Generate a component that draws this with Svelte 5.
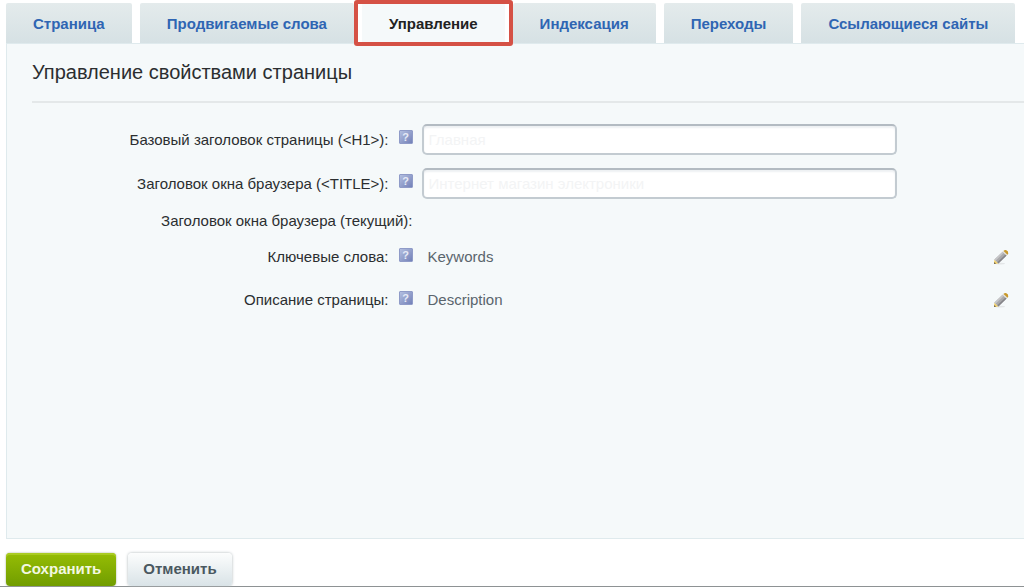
<script>
  let activeTab = $state('manage');
  let h1 = $state('Главная');
  let title = $state('Интернет магазин электроники');

  const tabs = [
    { id: 'page', label: 'Страница' },
    { id: 'words', label: 'Продвигаемые слова' },
    { id: 'manage', label: 'Управление' },
    { id: 'index', label: 'Индексация' },
    { id: 'visits', label: 'Переходы' },
    { id: 'refs', label: 'Ссылающиеся сайты' }
  ];
</script>

{#snippet help()}
  <button type="button" class="help">?</button>
{/snippet}

{#snippet pencil()}
  <button type="button" class="edit" aria-label="Изменить">
    <svg width="16" height="16" viewBox="0 0 16 16">
      <ellipse cx="7" cy="14.6" rx="5" ry="0.9" fill="#e3e6e7" />
      <path d="M1 15 L1.4 10.6 L5.4 14.4 Z" fill="#f3d26a" />
      <path d="M1 15 L1.2 13 L3 14.7 Z" fill="#6b5f4a" />
      <path d="M1.4 10.6 L9.6 2.8 L13.6 6.6 L5.4 14.4 Z" fill="#a9a9ab" />
      <path d="M1.4 10.6 L9.6 2.8 L10.8 3.9 L2.6 11.7 Z" fill="#c6c6c8" />
      <path d="M4.3 13.3 L12.5 5.5 L13.6 6.6 L5.4 14.4 Z" fill="#858589" />
      <path d="M10.4 2 Q11.6 0.8 13.4 1.2 Q15.6 2.2 15.2 4.4 L14.3 5.9 Z" fill="#c8982a" />
      <path d="M9.6 2.8 L10.4 2 L14.4 5.8 L13.6 6.6 Z" fill="#e0dccf" />
    </svg>
  </button>
{/snippet}

<div class="page">
  <div class="tabs">
    {#each tabs as tab}
      <button
        type="button"
        class="tab"
        class:active={activeTab === tab.id}
        onclick={() => (activeTab = tab.id)}>{tab.label}</button>
    {/each}
  </div>

  <form id="seo-form" class="panel">
    <h1>Управление свойствами страницы</h1>

    <div class="row">
      <div class="name"><label for="h1">Базовый заголовок страницы (&lt;H1&gt;):</label>{@render help()}</div>
      <div class="field"><input id="h1" type="text" bind:value={h1} /></div>
    </div>
    <div class="row">
      <div class="name"><label for="title">Заголовок окна браузера (&lt;TITLE&gt;):</label>{@render help()}</div>
      <div class="field"><input id="title" type="text" bind:value={title} /></div>
    </div>
    <div class="row current">
      <div class="name"><span>Заголовок окна браузера (текущий):</span></div>
    </div>
    <div class="row text">
      <div class="name"><span>Ключевые слова:</span>{@render help()}</div>
      <div class="field value"><span>Keywords</span>{@render pencil()}</div>
    </div>
    <div class="row text">
      <div class="name"><span>Описание страницы:</span>{@render help()}</div>
      <div class="field value"><span>Description</span>{@render pencil()}</div>
    </div>
  </form>

  <div class="buttons">
    <button type="submit" form="seo-form" class="btn save">Сохранить</button>
    <button type="button" class="btn cancel">Отменить</button>
  </div>
</div>

<style>
  :global(body) {
    background: #fff;
  }

  .page {
    display: flex;
    flex-direction: column;
    box-sizing: border-box;
    min-height: 100vh;
    padding-top: 3px;
    border-bottom: 1px solid #8e9294;
    font-family: "Liberation Sans", Arial, sans-serif;
    color: #2b2e30;
  }

  button {
    font-family: inherit;
    cursor: pointer;
  }

  .tabs {
    display: flex;
    gap: 8px;
    padding-left: 6px;
  }

  .tab {
    position: relative;
    height: 40px;
    padding: 0 27px;
    border: 0;
    border-radius: 2px 2px 0 0;
    background: linear-gradient(#e4ebec, #d6e1e4);
    color: #2f65b3;
    font-size: 15px;
    font-weight: bold;
    white-space: nowrap;
  }

  .tab.active {
    background: #f5f9fa;
    color: #222;
  }

  /* frame around the open tab */
  .tab.active::after {
    content: "";
    position: absolute;
    inset: -3px -8px;
    border: 4px solid #d55145;
    border-radius: 3px;
  }

  .panel {
    flex: 1;
    margin-left: 6px;
    padding: 0 0 16px 25px;
    border: 1px solid #dfeaed;
    border-right: 0;
    background: #f5f9fa;
  }

  h1 {
    margin: 0 0 14px;
    padding: 16px 0 17px;
    border-bottom: 2px solid #e4e8e9;
    font-size: 20px;
    line-height: 24px;
    font-weight: normal;
  }

  .row {
    display: grid;
    grid-template-columns: 12fr 19fr;
    gap: 9px;
    align-items: center;
    height: 44px;
    font-size: 15px;
  }

  .row.current {
    height: 30px;
  }

  .row.text {
    height: 43px;
  }

  .name {
    display: flex;
    justify-content: flex-end;
    align-items: center;
    gap: 10px;
    white-space: nowrap;
  }

  .help {
    width: 14px;
    height: 14px;
    margin-bottom: 4px;
    padding: 0;
    border: 1px solid #8f9bc8;
    border-radius: 1px;
    background: linear-gradient(135deg, #b3bfe0, #7381b8);
    color: #e6eaf6;
    font-size: 11px;
    line-height: 12px;
    font-weight: bold;
  }

  .field input {
    box-sizing: border-box;
    width: 79%;
    height: 31px;
    padding: 0 5px;
    border: 2px solid #c3cbd1;
    border-top-color: #b3bbc2;
    border-radius: 5px;
    background: #fff;
    box-shadow: inset 0 2px 2px #eef1f3;
    color: #f3f4f5;
    font-family: inherit;
    font-size: 15px;
  }

  .value {
    display: flex;
    justify-content: space-between;
    align-items: center;
    padding: 0 15px 0 6px;
    color: #5a656d;
  }

  .edit {
    width: 16px;
    height: 16px;
    padding: 0;
    border: 0;
    background: none;
  }

  .edit svg {
    display: block;
  }

  .buttons {
    display: flex;
    gap: 12px;
    padding: 14px 0 0 6px;
  }

  .btn {
    height: 33px;
    padding: 0 15px 3px;
    border: 0;
    border-radius: 4px;
    font-size: 15px;
    font-weight: bold;
  }

  .save {
    background: linear-gradient(#96bd05, #719d00);
    box-shadow: inset 0 2px 0 #aacc22, 0 0 2px #9aa58a;
    color: #f3f8e2;
  }

  .cancel {
    background: linear-gradient(#fcfdfd, #d9e3e7);
    box-shadow: 0 0 3px #a9b2b6;
    color: #4a5860;
  }
</style>
